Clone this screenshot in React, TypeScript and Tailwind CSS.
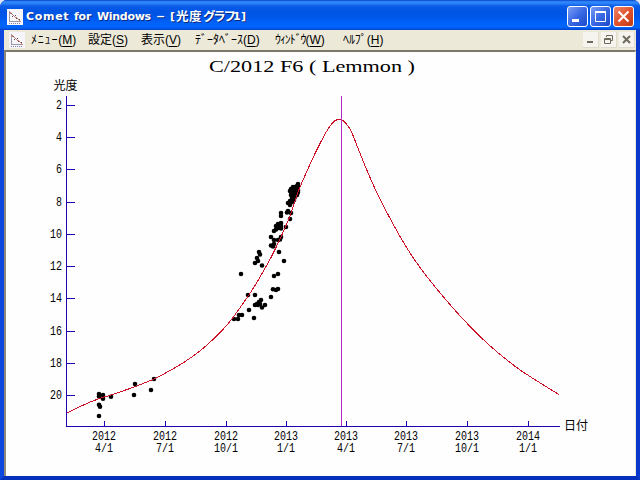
import React from 'react';

type Point = [number, number];

const curve: Point[] = [
  [66.7, 413.3], [80, 406.5], [99, 398.6], [111, 395], [134, 387], [154, 379],
  [165.5, 373], [183.5, 362.6], [203.5, 348], [227, 325], [248.5, 295.5],
  [260, 277], [271.8, 256], [281.8, 235], [290, 216], [297.8, 192.6],
  [306.8, 171.5], [316.8, 150], [326.8, 131], [333.3, 122], [336.5, 120],
  [339.5, 119.5], [343.5, 121], [350.3, 129.5], [358.5, 149.5], [366.8, 170],
  [375.2, 189.2], [383.5, 206], [400.2, 236.8], [416.8, 263], [438.5, 291],
  [463.5, 319.6], [490, 345.8], [516.8, 367.6], [540.3, 383], [559, 394.5],
];

function smoothPath(p: Point[]): string {
  let d = `M${p[0][0]} ${p[0][1]}`;
  for (let i = 0; i < p.length - 1; i++) {
    const a = p[Math.max(i - 1, 0)];
    const b = p[i];
    const c = p[i + 1];
    const e = p[Math.min(i + 2, p.length - 1)];
    d += `C${b[0] + (c[0] - a[0]) / 6} ${b[1] + (c[1] - a[1]) / 6} ${c[0] - (e[0] - b[0]) / 6} ${c[1] - (e[1] - b[1]) / 6} ${c[0]} ${c[1]}`;
  }
  return d;
}

const observations: Point[] = [
  [99, 394], [99, 396.5], [103, 395], [103, 398.7], [99, 404.7], [100, 406.7], [99, 416], [111, 396.7],
  [134, 395], [135, 384], [151, 390], [154, 379],
  [234, 319], [238, 319], [239, 315], [242, 315], [249, 310], [254, 318], [248, 295], [255, 295],
  [255, 305], [258, 305], [259, 302], [261, 300], [260, 304], [257, 304], [262, 307.5], [265, 305],
  [241, 274], [255, 263], [257, 258], [258, 261], [259, 252], [260, 254.5], [262, 265.5],
  [271, 297], [273, 289.3], [276, 290], [278, 289], [274, 276], [278, 274], [284, 261], [279, 252],
  [271, 245.5], [273, 246.5], [274, 244], [271, 237], [274, 240], [278, 240], [280, 239.5], [281, 237],
  [274, 231], [276, 229.5], [276, 226], [278, 224], [279, 227], [281, 223], [281, 226], [281, 228.5], [278, 228],
  [281, 213], [281, 216], [286, 227], [290, 219], [287, 212.5], [288, 211], [291, 213],
  [288, 203], [290, 205], [290, 201], [292, 202], [293, 201], [292, 198], [291, 195], [291, 192],
  [290, 191], [291, 189], [293, 187], [295, 187], [298, 184], [297, 186], [298, 187], [298, 190],
  [298, 192], [297, 195], [295, 197], [294, 195], [294, 192], [294, 189], [296, 191], [294, 200], [293, 197], [297.5, 193],
];

const yTicks: [string, number][] = [
  ['2', 105.5], ['4', 137.5], ['6', 169.5], ['8', 202.5], ['10', 234.5],
  ['12', 266.5], ['14', 298.5], ['16', 331.5], ['18', 363.5], ['20', 395.5],
];

const xTicks: [string, string, number][] = [
  ['2012', '4/1', 104.5], ['2012', '7/1', 165.5], ['2012', '10/1', 226.5], ['2013', '1/1', 286.5],
  ['2013', '4/1', 346.5], ['2013', '7/1', 406.5], ['2013', '10/1', 467.5], ['2014', '1/1', 528.5],
];

function LightCurve() {
  return (
    <svg viewBox="6 52 629 424" className="block h-[424px] w-[629px]">
      <text x="209" y="72" fontSize="17.5" textLength="206" lengthAdjust="spacingAndGlyphs" className="font-['Liberation_Serif',serif]">
        C/2012 F6 ( Lemmon )
      </text>
      <text x="53.5" y="90" fontSize="12" className="font-['Noto_Sans_CJK_JP',sans-serif]">光度</text>
      <text x="564" y="430" fontSize="12" className="font-['Noto_Sans_CJK_JP',sans-serif]">日付</text>
      <g stroke="#2000b0" strokeWidth="1" fill="none" shapeRendering="crispEdges">
        <path d="M66.5 96V426.5H560" />
        {yTicks.map(([t, y]) => <path key={t} d={`M67 ${y}h8`} />)}
        {xTicks.map(([, , x]) => <path key={x} d={`M${x} 421v5`} />)}
      </g>
      <g fontSize="12.5" className="font-['Liberation_Mono',monospace]">
        {yTicks.map(([t, y]) => (
          <text key={t} x={62 - t.length * 6} y={y + 3.5} textLength={t.length * 6} lengthAdjust="spacingAndGlyphs">{t}</text>
        ))}
      </g>
      <g fontSize="12" className="font-['Liberation_Mono',monospace]">
        {xTicks.map(([a, b, x]) => (
          <text key={x} transform={`translate(${x - 12.5} 0) scale(0.8333 1)`}>
            <tspan x="0" y="440">{a}</tspan>
            <tspan x={b.length === 4 ? 0 : 3.6} y="452">{b}</tspan>
          </text>
        ))}
      </g>
      {observations.map(([x, y], i) => <circle key={i} cx={x} cy={y} r="2.3" />)}
      <path d={smoothPath(curve)} stroke="#cc1025" strokeWidth="1" fill="none" shapeRendering="crispEdges" />
      <rect x="341" y="96" width="1" height="330" fill="#b428c4" />
    </svg>
  );
}

function AppIcon() {
  return (
    <svg viewBox="0 0 16 16" className="block h-4 w-4 shrink-0" shapeRendering="crispEdges">
      <path d="M0 0h16v16H0z" fill="#f6f6fa" />
      <path d="M2.5 2v10.500H14" stroke="#9a9aac" fill="none" />
      <path d="M2 3l3 2 3 3 3 2 3 3" stroke="#c98070" fill="none" />
      <path d="M4 4.500h1M5 7.500h1M8 6.500h1M9 9.500h1M12 10.500h1" stroke="#555" />
      <path d="M2 14.500h12" stroke="#8080b8" strokeDasharray="1 1" />
    </svg>
  );
}

function CaptionButton({ close, children }: { close?: boolean; children: React.ReactNode }) {
  return (
    <div
      className={
        'h-[21px] w-[21px] rounded-[3px] border border-white bg-gradient-to-br ' +
        (close ? 'from-[#ee8468] via-[#e0532d] to-[#c03a12]' : 'from-[#7a9cf4] via-[#3868e4] to-[#1c48c8]')
      }
    >
      <svg viewBox="0 0 19 19" className="block h-[19px] w-[19px]" fill="none" stroke="white">
        {children}
      </svg>
    </div>
  );
}

function ChildButton({ children }: { children: React.ReactNode }) {
  return (
    <div className="h-4 w-4 border-r border-b border-[#dedbcd] bg-[#f5f4ee]">
      <svg viewBox="0 0 15 15" className="block h-[15px] w-[15px]" fill="none" stroke="#6d6a5d">
        {children}
      </svg>
    </div>
  );
}

const menus: [string, string, string, string][] = [
  ['メニュー', 'ﾒﾆｭｰ', 'M', 'w-[57px] tracking-[0.8px]'],
  ['設定', '設定', 'S', 'w-[53px] tracking-[0px]'],
  ['表示', '表示', 'V', 'w-[54px] tracking-[0px]'],
  ['データベース', 'ﾃﾞｰﾀﾍﾞｰｽ', 'D', 'w-[80px] tracking-[0px]'],
  ['ウィンドウ', 'ｳｨﾝﾄﾞｳ', 'W', 'w-[68px] tracking-[-1.1px]'],
  ['ヘルプ', 'ﾍﾙﾌﾟ', 'H', 'w-[60px] tracking-[-0.1px]'],
];

export default function App() {
  return (
    <div className="h-[480px] w-[640px] overflow-hidden bg-[#dfe6f4]">
      <div className="flex h-full w-full flex-col overflow-hidden rounded-t-[7px] bg-[#0831d9]">
        <div className="flex h-[30px] shrink-0 items-center bg-[linear-gradient(180deg,#0840c0_0%,#2a80f8_5%,#3088fa_10%,#0a5ce8_20%,#0054e3_40%,#0058ec_60%,#0064fc_80%,#0062f8_92%,#0040c8_100%)] pt-[3px] pr-[6px] pl-[7px]">
          <AppIcon />
          <div className="ml-[3px] flex items-center pt-px whitespace-nowrap font-['DejaVu_Sans','Noto_Sans_CJK_JP',sans-serif] text-[11px] leading-4 font-bold text-white [text-shadow:1px_1px_0_#0a2a80]">
            <span className="w-[48px] tracking-[0.7px]">Comet</span>
            <span className="w-[23px] tracking-[-0.2px]">for</span>
            <span className="w-[59px] tracking-[-0.3px]">Windows</span>
            <span className="w-[14px]">−</span>
            <span className="w-[6px]">[</span>
            <span className="w-[27px] text-[12.5px] tracking-[0.5px]">光度</span>
            <span className="w-[30px] text-[12.5px] tracking-[-2.3px]">グラフ</span>
            <span className="w-[8px]">1</span>
            <span>]</span>
          </div>
          <div className="ml-auto flex gap-[2px]">
            <CaptionButton><path d="M4 13.500h7" strokeWidth="3" /></CaptionButton>
            <CaptionButton><path d="M4.500 4.500h10v10h-10zM4 5.500h11" strokeWidth="1" /><path d="M4 5h11" strokeWidth="2" /></CaptionButton>
            <CaptionButton close><path d="M4.500 4.500l10 10M14.500 4.500l-10 10" strokeWidth="2" /></CaptionButton>
          </div>
        </div>
        <div className="flex min-h-0 flex-1 flex-col border-r-4 border-b-4 border-l-4 border-r-[#0838cc] border-b-[#0430bc] border-l-[#0c48e0]">
          <div className="flex h-5 shrink-0 items-center bg-[#ece9d8] pr-[1px] pl-[5px]">
            <AppIcon />
            <div className="ml-[6px] flex whitespace-nowrap pb-px font-['Noto_Sans_CJK_JP',sans-serif] text-[12px] leading-[17px] text-black">
              {menus.map(([key, label, hot, cls]) => (
                <span key={key} className={cls}>
                  {label}
                  <span className="font-['Liberation_Sans',sans-serif] tracking-[0px]">(<u className="underline-offset-2">{hot}</u>)</span>
                </span>
              ))}
            </div>
            <div className="ml-auto flex gap-[2px]">
              <ChildButton><path d="M4 10h6" strokeWidth="2" /></ChildButton>
              <ChildButton><path d="M3.500 6.500h6v5h-6zM3 7.500h7M5.500 5V3.500h6v5H10" /></ChildButton>
              <ChildButton><path d="M4 4l7 7M11 4l-7 7" strokeWidth="2" /></ChildButton>
            </div>
          </div>
          <div className="min-h-0 flex-1 border-t-2 border-r border-l-2 border-t-[#7c796b] border-r-[#ece9d8] border-l-[#8c897b] bg-[#fefefe]">
            <LightCurve />
          </div>
        </div>
      </div>
    </div>
  );
}
